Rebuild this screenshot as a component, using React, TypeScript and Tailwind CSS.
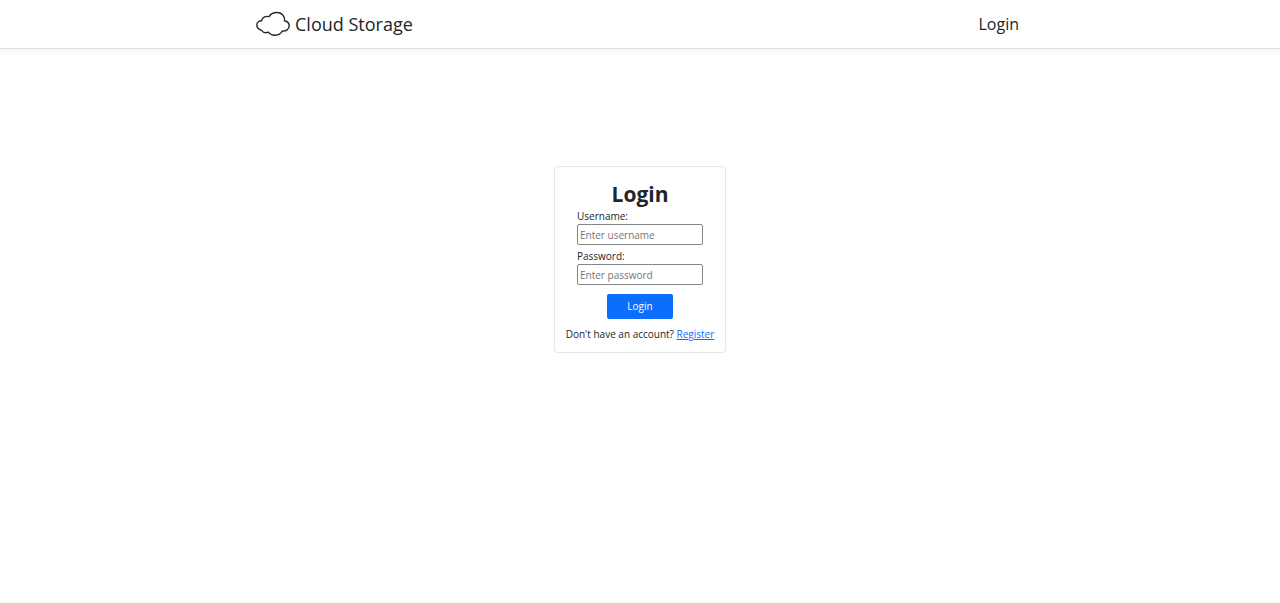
export default function App() {
  return (
    <div className="min-h-screen bg-white font-['Open_Sans','Noto_Sans',sans-serif] text-[#212529]">
      <header className="border-b border-[#dee2e6] bg-white shadow-[0_2px_6px_rgba(0,0,0,0.06)]">
        <nav className="mx-auto flex h-12 w-3/5 items-center justify-between">
          <a href="#" className="flex items-center gap-[5px] text-lg">
            <svg className="h-[26px] w-[34px]" viewBox="0 0 34 26" fill="none" stroke="currentColor" strokeWidth="1.4" strokeLinejoin="round" aria-hidden="true">
              <path d="M5.800 19.500C3 18.500 .8 16.500 .8 14C.8 11.500 3 9.800 5.500 9.800C6.200 6.500 9.500 4.700 13 5.700C14.500 2.800 17.500 1.500 20.800 1.500C25.500 1.500 29 4.800 28.600 9.800C31.500 10.500 33.200 12.300 33.200 14.800C33.200 18.300 30 20.500 26.200 20C25 22.800 21.500 24.400 18 24.200C15.500 24 13.500 23 12.300 21.200C9.500 22.200 7 21.500 5.800 19.500Z" />
            </svg>
            Cloud Storage
          </a>
          <a href="#" className="pr-[5px] text-base">Login</a>
        </nav>
      </header>
      <main className="flex justify-center pt-[117px]">
        <form className="flex flex-col items-center rounded border border-[#e4e6e9] px-[11px] py-[10px] text-[10px] leading-[15px]">
          <h1 className="mt-0.5 text-[21px] leading-[30px] font-bold">Login</h1>
          <div className="flex flex-col">
            <label htmlFor="username">Username:</label>
            <input id="username" placeholder="Enter username" className="mb-1 h-[21px] w-[126px] rounded-xs border border-[#858585] px-0.5 placeholder:text-[#757575]" />
            <label htmlFor="password">Password:</label>
            <input id="password" type="password" placeholder="Enter password" className="h-[21px] w-[126px] rounded-xs border border-[#858585] px-0.5 placeholder:text-[#757575]" />
          </div>
          <button type="button" className="mt-[9px] mb-2 h-[25px] w-[66px] rounded-xs bg-[#0d6efd] text-white">Login</button>
          <p>Don't have an account? <a href="#" className="text-[#0d6efd] underline">Register</a></p>
        </form>
      </main>
    </div>
  );
}
